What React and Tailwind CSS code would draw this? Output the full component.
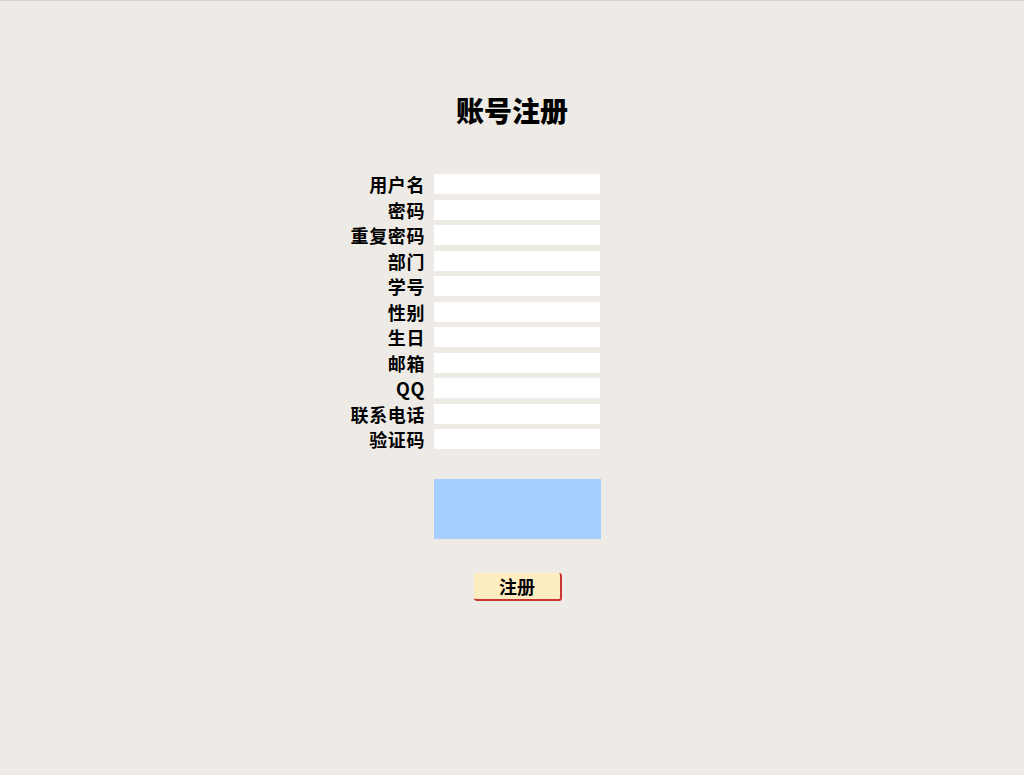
import React from "react";

const fields = [
  "用户名",
  "密码",
  "重复密码",
  "部门",
  "学号",
  "性别",
  "生日",
  "邮箱",
  "QQ",
  "联系电话",
  "验证码",
];

export default function App() {
  return (
    <div
      className="min-h-[775px] bg-[#eeebe6] border-t border-[#d4d1cc] text-black"
      style={{ fontFamily: '"Noto Sans CJK SC", "Noto Sans", sans-serif' }}
    >
      <h1 className="pt-[92px] text-center text-[28px] leading-[34px] font-black">
        账号注册
      </h1>
      <div className="w-[342px] mx-auto mt-[47px] grid grid-cols-[84px_166px] gap-x-[9px] gap-y-[5.5px] items-center">
        {fields.map((f) => (
          <React.Fragment key={f}>
            <label className="text-right text-[18px] leading-[20px] font-bold tracking-[0.6px]">
              {f}
            </label>
            <input
              type={f.includes("密码") ? "password" : "text"}
              className="h-[20px] w-[166px] bg-white outline-none border-0 px-1 text-[14px]"
            />
          </React.Fragment>
        ))}
        <div />
        <div className="mt-[24.5px] h-[60px] w-[167px] bg-[#a6cefe]" />
      </div>
      <div className="flex justify-center mt-[34px] pl-[12px]">
        <button className="w-[88px] h-[28px] bg-[#ffedc2] border-r-2 border-b-2 border-[#cc3333] rounded-[3px] text-[18px] font-bold leading-none">
          注册
        </button>
      </div>
    </div>
  );
}
